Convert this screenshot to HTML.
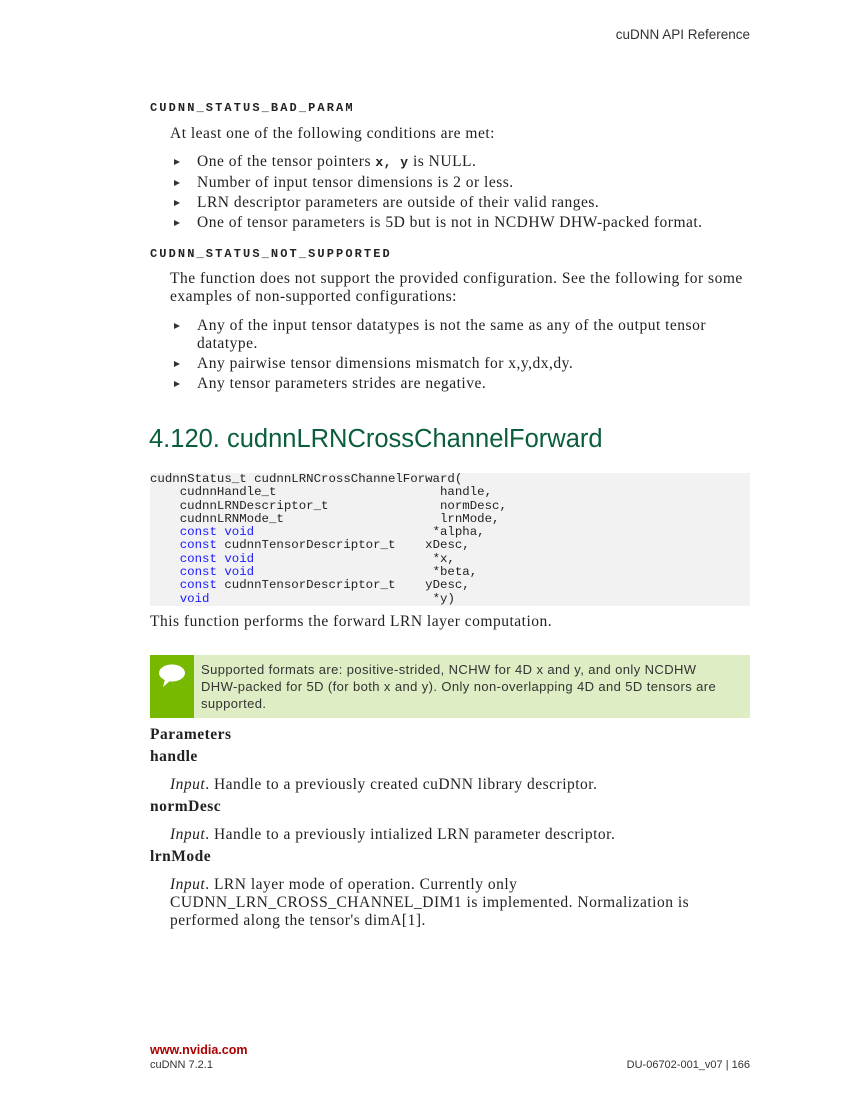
<!DOCTYPE html>
<html><head><meta charset="utf-8"><style>
body{margin:0;background:#fff;}
.page{position:relative;width:850px;height:1100px;font-family:"Liberation Serif",serif;color:#222;font-size:15.5px;letter-spacing:0.5px;}
.a{position:absolute;white-space:nowrap;}
.st{font-family:"Liberation Mono",monospace;font-weight:bold;font-size:12px;letter-spacing:2.1px;}
.b{position:absolute;left:172px;}
.b::before{content:"";position:absolute;left:-23px;top:6px;border-left:6px solid #333;border-top:3.5px solid transparent;border-bottom:3.5px solid transparent;}
.sans{font-family:"Liberation Sans",sans-serif;letter-spacing:0;}
pre{position:absolute;left:150px;top:473px;width:600px;height:133px;margin:0;background:#f2f2f2;font-family:"Liberation Mono",monospace;font-size:12.4px;line-height:13.3px;color:#222;letter-spacing:0;}
.k{color:#1a1aff;}
</style></head><body><div class="page">
<div class="a sans" style="right:100px;top:27px;font-size:13.5px;color:#333">cuDNN API Reference</div>
<div class="a st" style="left:150px;top:101px">CUDNN_STATUS_BAD_PARAM</div>
<div class="a" style="left:170px;top:125px">At least one of the following conditions are met:</div>
<div class="b a" style="left:197px;top:153px">One of the tensor pointers <b style="font-family:'Liberation Mono',monospace;font-size:13px">x, y</b> is NULL.</div>
<div class="b a" style="left:197px;top:174px">Number of input tensor dimensions is 2 or less.</div>
<div class="b a" style="left:197px;top:194px">LRN descriptor parameters are outside of their valid ranges.</div>
<div class="b a" style="left:197px;top:214px">One of tensor parameters is 5D but is not in NCDHW DHW-packed format.</div>
<div class="a st" style="left:150px;top:247px">CUDNN_STATUS_NOT_SUPPORTED</div>
<div class="a" style="left:170px;top:270px">The function does not support the provided configuration. See the following for some</div>
<div class="a" style="left:170px;top:288px">examples of non-supported configurations:</div>
<div class="b a" style="left:197px;top:317px">Any of the input tensor datatypes is not the same as any of the output tensor</div>
<div class="a" style="left:197px;top:335px">datatype.</div>
<div class="b a" style="left:197px;top:355px">Any pairwise tensor dimensions mismatch for x,y,dx,dy.</div>
<div class="b a" style="left:197px;top:375px">Any tensor parameters strides are negative.</div>
<div class="a sans" style="left:149px;top:425px;font-size:25.5px;color:#0b5e3b">4.120. cudnnLRNCrossChannelForward</div>
<pre>cudnnStatus_t cudnnLRNCrossChannelForward(
    cudnnHandle_t                      handle,
    cudnnLRNDescriptor_t               normDesc,
    cudnnLRNMode_t                     lrnMode,
    <span class="k">const void</span>                        *alpha,
    <span class="k">const</span> cudnnTensorDescriptor_t    xDesc,
    <span class="k">const void</span>                        *x,
    <span class="k">const void</span>                        *beta,
    <span class="k">const</span> cudnnTensorDescriptor_t    yDesc,
    <span class="k">void</span>                              *y)</pre>
<div class="a" style="left:150px;top:613px">This function performs the forward LRN layer computation.</div>
<div class="a" style="left:150px;top:655px;width:600px;height:63px;background:#dfedc4"></div>
<div class="a" style="left:150px;top:655px;width:44px;height:63px;background:#76b900"></div>
<svg class="a" style="left:157px;top:663px" width="30" height="26"><ellipse cx="15" cy="10" rx="13" ry="8.5" fill="#fff"/><path d="M8 16 L6 24 L14 17Z" fill="#fff"/></svg>
<div class="a sans" style="left:201px;top:661px;font-size:13px;letter-spacing:0.4px;line-height:17px;color:#333">Supported formats are: positive-strided, NCHW for 4D x and y, and only NCDHW<br>DHW-packed for 5D (for both x and y). Only non-overlapping 4D and 5D tensors are<br>supported.</div>
<div class="a" style="left:150px;top:726px;font-weight:bold">Parameters</div>
<div class="a" style="left:150px;top:748px;font-weight:bold">handle</div>
<div class="a" style="left:170px;top:776px"><i>Input</i>. Handle to a previously created cuDNN library descriptor.</div>
<div class="a" style="left:150px;top:798px;font-weight:bold">normDesc</div>
<div class="a" style="left:170px;top:826px"><i>Input</i>. Handle to a previously intialized LRN parameter descriptor.</div>
<div class="a" style="left:150px;top:848px;font-weight:bold">lrnMode</div>
<div class="a" style="left:170px;top:876px"><i>Input</i>. LRN layer mode of operation. Currently only</div>
<div class="a" style="left:170px;top:894px">CUDNN_LRN_CROSS_CHANNEL_DIM1 is implemented. Normalization is</div>
<div class="a" style="left:170px;top:912px">performed along the tensor's dimA[1].</div>
<div class="a sans" style="left:150px;top:1043px;font-size:12.5px;font-weight:bold;color:#a00">www.nvidia.com</div>
<div class="a sans" style="left:150px;top:1059px;font-size:11px;color:#333">cuDNN 7.2.1</div>
<div class="a sans" style="right:100px;top:1059px;font-size:11px;color:#333">DU-06702-001_v07 | 166</div>
</div></body></html>
